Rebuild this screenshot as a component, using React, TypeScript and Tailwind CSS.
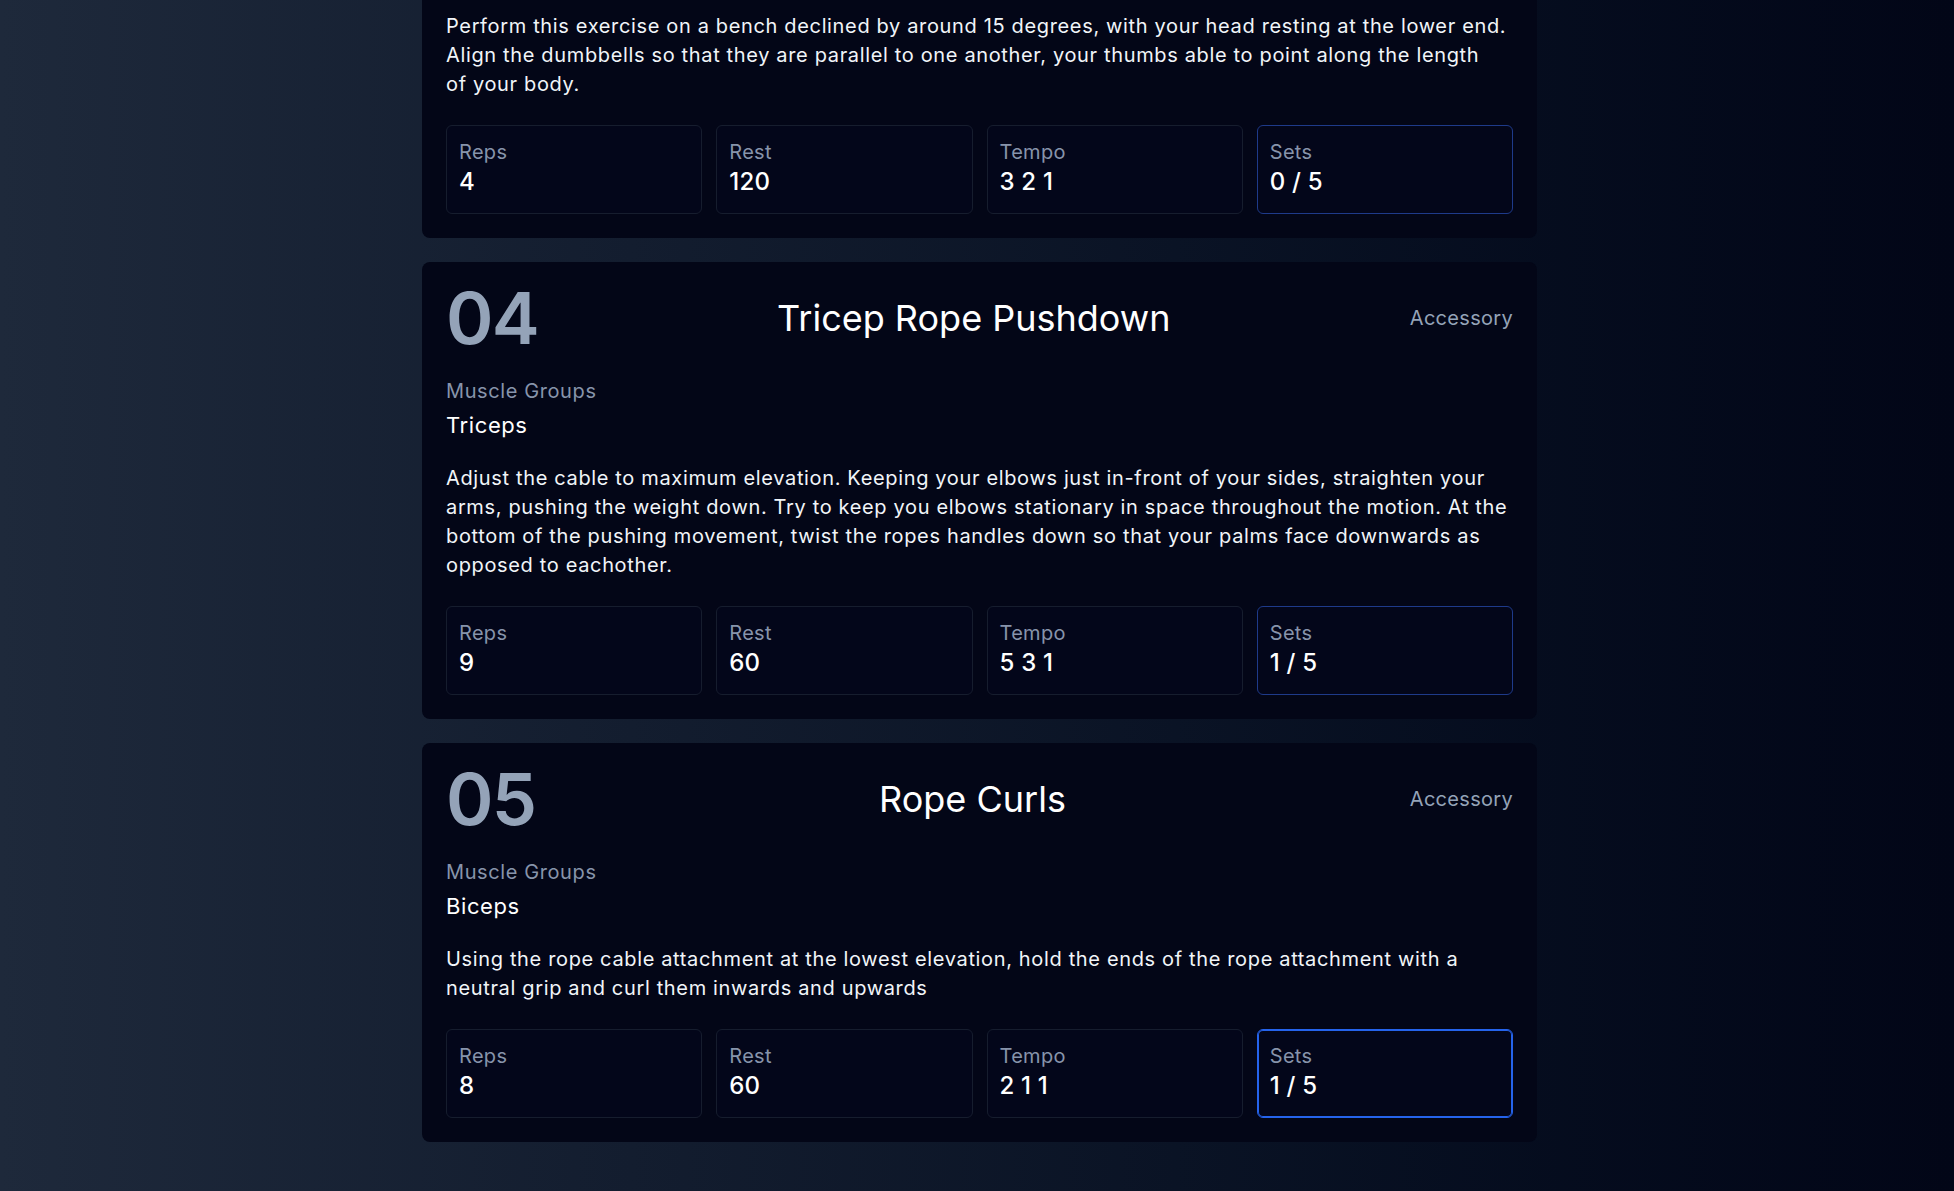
import React from 'react';

type Exercise = {
  id: number;
  num?: string;
  title?: string;
  kind?: string;
  muscles?: string;
  description: string[];
  reps: string;
  rest: string;
  tempo: string;
  sets: string;
  active?: boolean;
};

const EXERCISES: Exercise[] = [
  {
    id: 3,
    description: [
      'Perform this exercise on a bench declined by around 15 degrees, with your head resting at the lower end.',
      'Align the dumbbells so that they are parallel to one another, your thumbs able to point along the length',
      'of your body.',
    ],
    reps: '4',
    rest: '120',
    tempo: '3 2 1',
    sets: '0 / 5',
  },
  {
    id: 4,
    num: '04',
    title: 'Tricep Rope Pushdown',
    kind: 'Accessory',
    muscles: 'Triceps',
    description: [
      'Adjust the cable to maximum elevation. Keeping your elbows just in-front of your sides, straighten your',
      'arms, pushing the weight down. Try to keep you elbows stationary in space throughout the motion. At the',
      'bottom of the pushing movement, twist the ropes handles down so that your palms face downwards as',
      'opposed to eachother.',
    ],
    reps: '9',
    rest: '60',
    tempo: '5 3 1',
    sets: '1 / 5',
  },
  {
    id: 5,
    num: '05',
    title: 'Rope Curls',
    kind: 'Accessory',
    muscles: 'Biceps',
    description: [
      'Using the rope cable attachment at the lowest elevation, hold the ends of the rope attachment with a',
      'neutral grip and curl them inwards and upwards',
    ],
    reps: '8',
    rest: '60',
    tempo: '2 1 1',
    sets: '1 / 5',
    active: true,
  },
];

const Stat: React.FC<{ label: string; value: string; variant?: 'plain' | 'sets' | 'active' }> = ({
  label,
  value,
  variant = 'plain',
}) => {
  const border =
    variant === 'active'
      ? 'border-[#2563eb] shadow-[inset_0_0_0_1px_#2563eb]'
      : variant === 'sets'
        ? 'border-[#1e3a8a]'
        : 'border-[#161d2e]';
  return (
    <div className={`rounded-md border ${border} bg-[#03061a] px-3 pt-3 pb-[15px]`}>
      <div className="text-xl leading-7 tracking-[0.3px] text-[#8794ab]">{label}</div>
      <div className="text-2xl leading-8 font-medium tracking-[0.2px] text-white">{value}</div>
    </div>
  );
};

const ExerciseCard: React.FC<{ ex: Exercise }> = ({ ex }) => (
  <div className="rounded-lg bg-[#030617] p-6">
    {ex.num && (
      <>
        <div className="flex h-16 items-center justify-between">
          <span className="text-[72px] leading-none font-semibold tracking-tight text-[#94a3b8]">{ex.num}</span>
          <h2 className="text-4xl font-normal text-white">{ex.title}</h2>
          <span className="text-xl tracking-[0.3px] text-[#94a3b8]">{ex.kind}</span>
        </div>
        <div className="mt-[27px] text-xl leading-7 tracking-[0.6px] text-[#8794ab]">Muscle Groups</div>
        <div className="mt-1 text-[22px] leading-8 tracking-[0.6px] text-white">{ex.muscles}</div>
      </>
    )}
    <p
      className={`${ex.num ? 'mt-[23px]' : ''} text-xl leading-[29px] tracking-[0.65px] whitespace-nowrap text-[#f1f5f9]`}
    >
      {ex.description.map((line, i) => (
        <React.Fragment key={i}>
          {line}
          {i < ex.description.length - 1 && <br />}
        </React.Fragment>
      ))}
    </p>
    <div className="mt-[26px] grid grid-cols-4 gap-3.5">
      <Stat label="Reps" value={ex.reps} />
      <Stat label="Rest" value={ex.rest} />
      <Stat label="Tempo" value={ex.tempo} />
      <Stat label="Sets" value={ex.sets} variant={ex.active ? 'active' : 'sets'} />
    </div>
  </div>
);

const App: React.FC = () => {
  return (
    <div
      className="flex min-h-screen flex-col items-center bg-linear-to-r from-[#1e293b] to-[#020617] pl-[5px]"
      style={{ fontFamily: 'Inter, "Open Sans", sans-serif' }}
    >
      <div className="-mt-3 flex w-[1115px] flex-col gap-6 pb-12">
        {EXERCISES.map((ex) => (
          <ExerciseCard key={ex.id} ex={ex} />
        ))}
      </div>
    </div>
  );
};

export default App;
